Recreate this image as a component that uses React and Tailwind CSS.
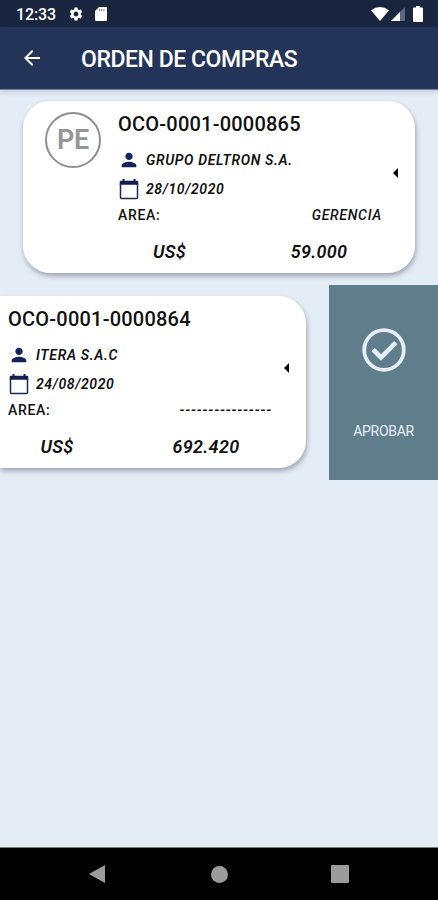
// src/screens/OrdenCompras.jsx

import { MdArrowBack, MdPerson, MdSettings } from 'react-icons/md';

const orders = [
  {
    id: 'OCO-0001-0000865',
    supplier: 'GRUPO DELTRON S.A.',
    date: '28/10/2020',
    area: 'GERENCIA',
    currency: 'US$',
    total: '59.000',
    swiped: false,
  },
  {
    id: 'OCO-0001-0000864',
    supplier: 'ITERA S.A.C',
    date: '24/08/2020',
    area: '----------------',
    currency: 'US$',
    total: '692.420',
    swiped: true,
  },
];

function StatusBar() {
  return (
    <div className="flex h-[27px] items-center bg-[#1a2640] pl-4 pr-[15px] text-white">
      <span className="w-[52px] whitespace-nowrap pt-[2px] text-[16px] font-medium leading-none tracking-[-0.1px]">12:33</span>
      <MdSettings className="h-4 w-4" />
      <svg className="ml-[11px] mt-[1px] h-[14px] w-3" viewBox="0 0 12 14">
        <path d="M4 0h7q1 0 1 1v12q0 1-1 1H1q-1 0-1-1V4z" fill="#fff" />
        <path d="M4.500 2v2M6.700 2v2M8.900 2v2" stroke="#1a2640" strokeWidth="1" opacity=".6" />
      </svg>
      <div className="ml-auto flex items-center">
        <svg className="h-[14px] w-[18px]" viewBox="0 0 18 14">
          <path d="M0 3.200Q9-3 18 3.200L9 14z" fill="#fff" />
        </svg>
        <svg className="ml-[2px] h-[14px] w-[14px]" viewBox="0 0 14 14">
          <path d="M14 0v14H0z" fill="#5b6579" />
          <path d="M9 5v9H0z" fill="#fff" />
        </svg>
        <svg className="ml-2 h-4 w-[10px]" viewBox="0 0 10 16">
          <path d="M3 0h4v1.500h2q1 0 1 1V15q0 1-1 1H1q-1 0-1-1V2.500q0-1 1-1h2z" fill="#fff" />
        </svg>
      </div>
    </div>
  );
}

function CalendarIcon() {
  return (
    <svg className="h-[21px] w-5" viewBox="0 0 20 21">
      <path d="M1.500 5v13.500q0 1 1 1h15q1 0 1-1V5" fill="none" stroke="#1b2a56" strokeWidth="1.500" />
      <path d="M.7 3q0-1.200 1.200-1.200h1.600V0h2v1.800h9V0h2v1.800h1.600q1.200 0 1.200 1.200v2.700H.7z" fill="#101f4e" />
    </svg>
  );
}

function OrderCard({ order }) {
  return (
    <div
      className={`flex h-[172px] shrink-0 bg-white text-[#111] shadow-[1px_3px_5px_rgba(50,60,80,0.4)] ${
        order.swiped ? 'w-[306px] rounded-r-[27px] pl-2' : 'ml-[23px] w-[392px] rounded-[27px]'
      }`}
    >
      {!order.swiped && (
        <div className="w-[95px] shrink-0 pl-[22px] pt-[11px]">
          <div className="flex h-14 w-14 items-center justify-center rounded-full border-2 border-[#8f8f8f] text-[27px] font-semibold tracking-[-0.3px] text-[#969696]">
            PE
          </div>
        </div>
      )}
      <div className="w-[264px] shrink-0 whitespace-nowrap">
        <h2 className="flex h-[46px] items-center text-[20px] font-medium tracking-[0.22px]">{order.id}</h2>
        <div className="flex h-[26px] items-center text-[14px] font-semibold italic tracking-[0.65px]">
          <MdPerson className="mr-[6px] h-[22px] w-[22px] text-[#14235a]" />
          {order.supplier}
        </div>
        <div className="flex h-8 items-center text-[14px] font-semibold italic tracking-[0.6px]">
          <span className="mr-[7px] pl-[1px]">
            <CalendarIcon />
          </span>
          {order.date}
        </div>
        <div className="flex h-5 items-center justify-between pt-[1px] text-[14px] font-medium tracking-[0.65px]">
          <span>AREA:</span>
          {/^-+$/.test(order.area) ? (
            <span className="font-semibold italic tracking-[0.8px]">{order.area}</span>
          ) : (
            <span className="italic tracking-[0.7px]">{order.area}</span>
          )}
        </div>
        <div className="mt-[5px] flex h-[43px] items-center text-center text-[18px] font-semibold italic tracking-[0.3px]">
          <span className={order.swiped ? 'w-[98px] shrink-0' : 'w-[103px] shrink-0'}>{order.currency}</span>
          <span className={order.swiped ? 'w-[200px] shrink-0' : 'w-[196px] shrink-0'}>{order.total}</span>
        </div>
      </div>
      <svg
        className={`mt-[67px] h-[10px] w-[5px] shrink-0 ${order.swiped ? 'ml-3' : 'ml-[11px]'}`}
        viewBox="0 0 5 10"
      >
        <path d="M5 0v10L0 5z" fill="#000" />
      </svg>
    </div>
  );
}

function ApproveAction() {
  return (
    <button className="ml-[23px] flex h-[195px] w-[109px] flex-col items-center bg-[#607d8b] text-[#e6eefa]">
      <svg className="mt-[43px] h-11 w-11" viewBox="0 0 44 44" fill="none" stroke="currentColor">
        <circle cx="22" cy="22" r="19.800" strokeWidth="3.800" />
        <path d="M11 21.500l8 8L33.800 14.700" strokeWidth="4.600" />
      </svg>
      <span className="mt-[49px] text-[14px] leading-5 tracking-[-0.3px]">APROBAR</span>
    </button>
  );
}

export default function App() {
  return (
    <div className="flex h-[900px] w-[438px] flex-col overflow-hidden bg-[#e4ecf5] font-['Roboto',sans-serif]">
      <StatusBar />
      <header className="z-10 flex h-[63px] items-center border-b border-[#75809f] bg-[#243459] pl-[20px] text-white shadow-[0_2px_5px_rgba(50,70,100,0.2)]">
        <MdArrowBack className="h-6 w-6" />
        <h1 className="ml-[37px] pt-1 text-[23px] font-medium tracking-[-0.45px]">ORDEN DE COMPRAS</h1>
      </header>
      <main className="flex-1">
        {orders.map((order) => (
          <div key={order.id} className="flex h-[195px]">
            <div className="pt-[11px]">
              <OrderCard order={order} />
            </div>
            {order.swiped && <ApproveAction />}
          </div>
        ))}
      </main>
      <nav className="flex h-[53px] items-center border-t border-[#777] bg-black pl-[89px]">
        <svg className="h-[18px] w-4" viewBox="0 0 16 18">
          <path d="M16 0v18L0 9z" fill="#9b9b9b" />
        </svg>
        <div className="ml-[106px] h-[17px] w-[17px] rounded-full bg-[#9b9b9b]" />
        <div className="ml-[103px] h-[18px] w-[18px] rounded-[1px] bg-[#9b9b9b]" />
      </nav>
    </div>
  );
}
